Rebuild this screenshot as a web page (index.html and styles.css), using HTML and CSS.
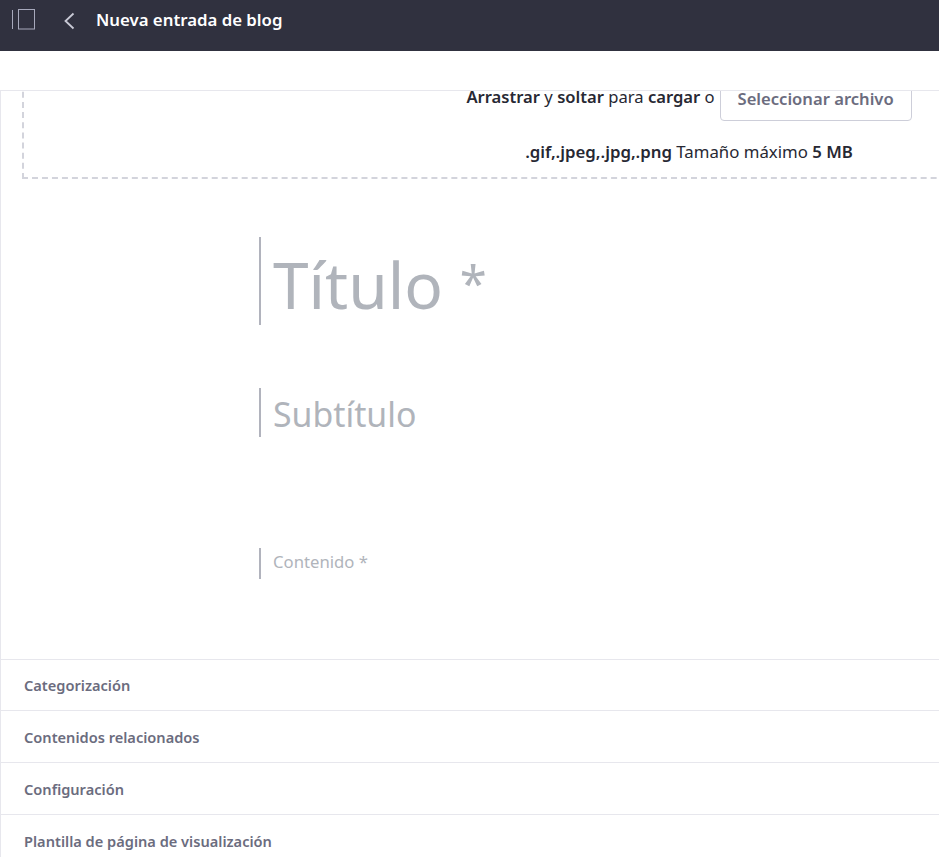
FILE: index.html
```html
<!DOCTYPE html>
<html>
<head>
    <meta name="viewport" content="width=device-width, initial-scale=1.0">
    <title>Nueva entrada de blog</title>
    <link rel="stylesheet" href="styles.css">
</head>
<body>
    <div class="top-bar">
        <svg class="sidebar-icon" width="26" height="23" viewBox="0 0 26 23" fill="none" stroke="#a7a9bc" stroke-width="1">
            <path d="M2.5 1V20"/>
            <rect x="8.5" y="0.5" width="16" height="19.5"/>
        </svg>
        <svg class="back-icon" width="14" height="20" viewBox="0 0 14 20" fill="none" stroke="#c9cad6" stroke-width="1.8">
            <path d="M11.5 2.5L3.5 10L11.5 17.5"/>
        </svg>
        <h1 class="page-title">Nueva entrada de blog</h1>
    </div>
    <div class="tool-bar"></div>

    <div class="content">
        <div class="drop-zone">
            <div class="drop-row">
                <span><b>Arrastrar</b> y <b>soltar</b> para <b>cargar</b> o</span>
                <button class="select-button">Seleccionar archivo</button>
            </div>
            <p class="drop-hint"><b>.gif,.jpeg,.jpg,.png</b> Tamaño máximo <b>5 MB</b></p>
        </div>

        <div class="editor">
            <div class="field field-title">Título <span class="required-mark">*</span></div>
            <div class="field field-subtitle">Subtítulo</div>
            <div class="field field-body">Contenido *</div>
        </div>

        <div class="panel">Categorización</div>
        <div class="panel">Contenidos relacionados</div>
        <div class="panel">Configuración</div>
        <div class="panel">Plantilla de página de visualización</div>
    </div>
</body>
</html>
```

FILE: styles.css
```css
html, body {
    height: 100%;
}

body {
    font-family: "Noto Sans", "Open Sans", sans-serif;
    margin: 0;
    padding: 0;
    background-color: #ffffff;
    color: #272833;
    overflow: hidden;
}

.top-bar {
    display: flex;
    align-items: center;
    height: 51px;
    padding-left: 10px;
    padding-bottom: 10px;
    box-sizing: border-box;
    background-color: #30313f;
}

.sidebar-icon {
    margin-right: 26px;
}

.back-icon {
    margin-right: 20px;
}

.page-title {
    margin: 0 0 2px;
    font-size: 16.8px;
    font-weight: 600;
    color: #ffffff;
}

.tool-bar {
    height: 39px;
    border-bottom: 1px solid #e7e7ed;
}

.content {
    height: 766px;
    overflow: hidden;
    border-left: 1px solid #e7e7ed;
}

/* wider than the window, its centre sits near x=690 */
.drop-zone {
    width: 1334px;
    height: 138px;
    margin: -50px 0 0 21px;
    padding-top: 40px;
    box-sizing: border-box;
    border: 2px dashed #d3d4dc;
    font-size: 16.6px;
    text-align: center;
}

.drop-row {
    display: flex;
    justify-content: center;
    align-items: flex-start;
    gap: 5px;
    height: 40px;
}

.drop-row span {
    line-height: 22px;
    margin-top: 3px;
    white-space: nowrap;
}

.drop-row b, .drop-hint b {
    font-weight: 600;
}

.select-button {
    width: 192px;
    height: 40px;
    margin-top: -2px;
    padding: 0 0 6px;
    background-color: #ffffff;
    border: 1px solid #cdced9;
    border-radius: 4px;
    color: #6b6c7e;
    font-family: inherit;
    font-size: 16.6px;
    font-weight: 600;
}

.drop-hint {
    margin: 0;
    padding-top: 18px;
    line-height: 22px;
    font-size: 16.8px;
    white-space: nowrap;
}

.editor {
    height: 481px;
    padding: 58px 0 0 258px;
    box-sizing: border-box;
    border-bottom: 1px solid #e7e7ed;
}

.field {
    border-left: 2px solid #b1b3bd;
    padding-left: 12px;
    color: #b0b4bb;
}

.field-title {
    height: 88px;
    font-size: 64px;
    line-height: 92px;
    margin-bottom: 63px;
}

.required-mark {
    font-size: 49px;
    vertical-align: 7px;
}

.field-subtitle {
    height: 49px;
    font-size: 33.8px;
    line-height: 52px;
    margin-bottom: 111px;
}

.field-body {
    height: 31px;
    font-size: 16.7px;
    line-height: 28px;
}

.panel {
    height: 51px;
    padding-left: 23px;
    line-height: 53px;
    border-bottom: 1px solid #e7e7ed;
    color: #6b6c7e;
    font-size: 14.6px;
    font-weight: 600;
}

.editor + .panel {
    height: 50px;
    line-height: 51px;
}
```
